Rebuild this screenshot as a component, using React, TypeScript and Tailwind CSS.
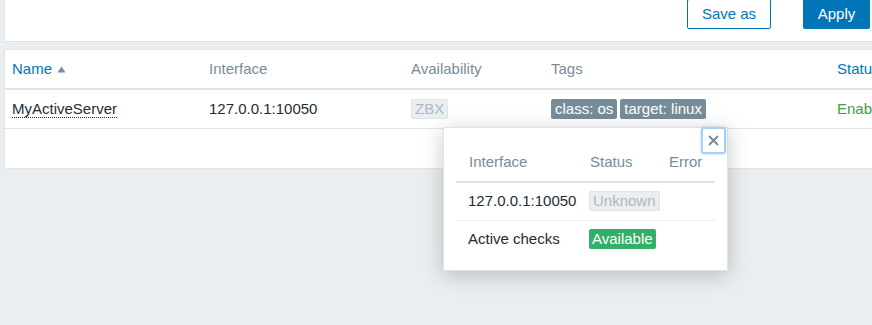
import React from "react";

const font = { fontFamily: '"Liberation Sans", Arial, sans-serif' };

function SortUp() {
  return (
    <svg width="9" height="7" viewBox="0 0 9 7" className="ml-[5px] mt-[1px]">
      <path d="M0.5 6.5 L4.5 0.5 L8.5 6.5 Z" fill="#768d99" />
    </svg>
  );
}

export default function App() {
  return (
    <div
      className="relative w-[872px] h-[325px] overflow-hidden bg-[#ebeef0] text-[15px] text-[#1f2c33]"
      style={font}
    >
      <div className="w-[1200px] pl-[4px]">
        {/* filter panel */}
        <div className="-mt-[2px] h-[44px] bg-white border border-[#dfe4e7] flex items-start">
          <div className="ml-[682px] flex gap-[32px]">
            <button className="h-[30px] w-[84px] border border-[#0275b8] rounded-[2px] bg-white text-[#0275b8] text-[15px] leading-[28px]">
              Save as
            </button>
            <button className="h-[30px] w-[67px] rounded-[2px] bg-[#0275b8] text-white text-[15px] leading-[30px]">
              Apply
            </button>
          </div>
        </div>

        {/* table panel */}
        <div className="mt-[7px] h-[120px] bg-white border border-[#dfe4e7]">
          <div className="flex h-[40px] items-center border-b-2 border-[#dfe4e7] text-[#768d99]">
            <div className="w-[204px] pl-[7px] flex items-center text-[#0275b8]">
              Name
              <SortUp />
            </div>
            <div className="w-[202px]">Interface</div>
            <div className="w-[140px]">Availability</div>
            <div className="w-[286px]">Tags</div>
            <div className="text-[#0275b8]">Status</div>
          </div>
          <div className="flex h-[39px] items-center border-b border-[#dfe4e7]">
            <div className="w-[204px] pl-[7px]">
              <span className="border-b border-dotted border-[#1f2c33]">MyActiveServer</span>
            </div>
            <div className="w-[202px]">127.0.0.1:10050</div>
            <div className="w-[140px]">
              <span className="inline-block h-[20px] leading-[18px] px-[3px] border border-[#dfe4e7] bg-[#ebeef0] text-[#acbbc2] rounded-[2px]">
                ZBX
              </span>
            </div>
            <div className="w-[286px] flex gap-[3px]">
              <span className="inline-block h-[20px] leading-[20px] px-[4px] bg-[#768d99] text-white rounded-[2px]">
                class: os
              </span>
              <span className="inline-block h-[20px] leading-[20px] px-[4px] bg-[#768d99] text-white rounded-[2px]">
                target: linux
              </span>
            </div>
            <div className="text-[#429e47]">Enabled</div>
          </div>
        </div>
      </div>

      {/* popup */}
      <div className="absolute left-[443px] top-[127px] w-[285px] h-[144px] bg-white border border-[#dfe4e7] shadow-[0_4px_20px_rgba(0,0,0,0.22)] pt-[15px] px-[12px]">
        <button className="absolute top-[-1px] right-[1px] w-[25px] h-[27px] rounded-[3px] border-2 border-[#a9d0f0] shadow-[0_0_3px_rgba(2,117,184,0.3)] flex items-center justify-center bg-white">
          <svg width="11" height="11" viewBox="0 0 11 11">
            <path d="M1 1 L10 10 M10 1 L1 10" stroke="#768d99" strokeWidth="2" />
          </svg>
        </button>
        <div className="flex h-[40px] items-center border-b-2 border-[#dfe4e7] text-[#768d99]">
          <div className="w-[121px] pl-[13px]">Interface</div>
          <div className="w-[79px] pl-[13px]">Status</div>
          <div className="pl-[13px]">Error</div>
        </div>
        <div className="flex h-[38px] items-center border-b border-[#ebeef0]">
          <div className="w-[121px] pl-[12px]">127.0.0.1:10050</div>
          <div className="w-[79px] pl-[12px]">
            <span className="inline-block h-[20px] leading-[18px] px-[3px] border border-[#dfe4e7] bg-[#ebeef0] text-[#acbbc2] rounded-[2px]">
              Unknown
            </span>
          </div>
        </div>
        <div className="flex h-[37px] items-center">
          <div className="w-[121px] pl-[12px]">Active checks</div>
          <div className="w-[79px] pl-[12px]">
            <span className="inline-block h-[20px] leading-[20px] px-[3px] bg-[#34af67] text-white rounded-[2px]">
              Available
            </span>
          </div>
        </div>
      </div>
    </div>
  );
}
